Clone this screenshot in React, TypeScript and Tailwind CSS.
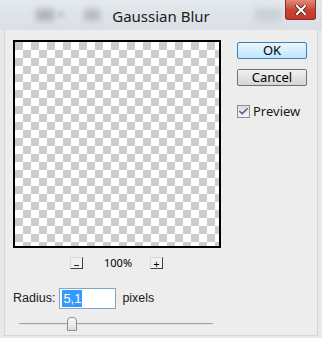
import { Check } from 'lucide-react';

const ui = "font-['Noto_Sans','Open_Sans',sans-serif]";

const ZoomButton = ({ label }: { label: string }) => (
  <div className="flex h-[12px] w-[13px] items-center justify-center border border-[#d8d8d8] border-b-[#404040] border-r-[#404040] bg-[#f0f0f0] text-[11px] leading-none text-black">
    {label}
  </div>
);

const App = () => {
  return (
    <div className={`flex h-[338px] w-[322px] flex-col overflow-hidden bg-[#e6e9ec] ${ui}`}>
      {/* title bar */}
      <div className="relative flex h-[30px] shrink-0 items-center justify-center bg-gradient-to-b from-[#e4e9ee] to-[#d9dfe4]">
        <div className="absolute left-[36px] top-[9px] h-[12px] w-[18px] bg-[#9aa0a6] opacity-70 blur-[3px]" />
        <div className="absolute left-[58px] top-[12px] h-[5px] w-[6px] bg-[#9aa0a6] opacity-50 blur-[2px]" />
        <div className="absolute left-[84px] top-[9px] h-[12px] w-[16px] bg-[#9aa0a6] opacity-60 blur-[3px]" />
        <div className="absolute left-[254px] top-[8px] h-[14px] w-[28px] bg-[#c4cacf] opacity-70 blur-[3px]" />
        <span className="relative pt-[2px] text-[15px] text-[#1a1a1a]">Gaussian Blur</span>
        <div className="absolute right-[6px] top-0 flex h-[20px] w-[31px] items-center justify-center rounded-b-[3px] border border-t-0 border-[#8a2d23] bg-gradient-to-b from-[#e08a7c] via-[#cc4533] to-[#c0382a]">
          <svg width="12" height="10" viewBox="0 0 12 10">
            <path d="M2 1 L10 9 M10 1 L2 9" stroke="#3a1410" strokeWidth="3.6" strokeLinecap="square" />
            <path d="M2 1 L10 9 M10 1 L2 9" stroke="#ffffff" strokeWidth="2.2" strokeLinecap="square" />
          </svg>
        </div>
      </div>

      {/* body */}
      <div className="mx-[4px] mb-[2px] flex flex-1 border border-t-0 border-[#d6d6d6] bg-[#ededed] pl-[8px] pt-[10px]">
        <div className="flex w-[208px] flex-col">
          <div className="h-[208px] w-[208px] border-2 border-black bg-[conic-gradient(#fff_25%,#cdcdcd_0_50%,#fff_0_75%,#cdcdcd_0)] bg-[length:16px_16px]" />
          <div className="mt-[7px] flex items-center pl-[57px]">
            <ZoomButton label="–" />
            <span className="ml-[21px] w-[26px] text-[11px] text-black">100%</span>
            <span className="ml-[20px]">
              <ZoomButton label="+" />
            </span>
          </div>
          <div className="mt-[16px] flex items-center font-['Liberation_Sans',Arial,sans-serif]">
            <span className="text-[12.5px] text-[#1a1a1a]">Radius:</span>
            <div className="ml-[4px] flex h-[21px] w-[57px] items-center border border-[#7fa6c6] bg-white pl-[2px]">
              <span className="bg-[#3399ff] px-[1px] text-[13px] leading-[17px] text-white">5,1</span>
            </div>
            <span className="ml-[6px] text-[12.5px] text-[#1a1a1a]">pixels</span>
          </div>
          <div className="relative mt-[8px] ml-[6px] flex h-[14px] w-[194px] items-center">
            <div className="h-[2px] w-full border-t border-[#a0a0a0] bg-[#e4e4e4]" />
            <div className="absolute left-[48px] top-0 h-[14px] w-[10px] rounded-t-[4px] border border-[#909090] bg-gradient-to-b from-[#fafafa] to-[#dcdcdc]" />
          </div>
        </div>

        <div className="ml-[16px] flex flex-col pt-[2px]">
          <div className="flex h-[17px] w-[70px] items-center justify-center rounded-[2px] border border-[#3c7fb1] bg-gradient-to-b from-[#eaf6fd] to-[#bee6fd] text-[13px] text-black">
            OK
          </div>
          <div className="mt-[10px] flex h-[17px] w-[70px] items-center justify-center rounded-[2px] border border-[#707070] bg-gradient-to-b from-[#f2f2f2] to-[#d4d4d4] text-[13px] text-black">
            Cancel
          </div>
          <div className="mt-[16px] flex items-center">
            <div className="flex h-[13px] w-[13px] items-center justify-center border border-[#8e8f8f] bg-gradient-to-b from-[#dcdcdc] to-[#f6f6f6]">
              <Check size={11} strokeWidth={3.5} className="text-[#4a5f97]" />
            </div>
            <span className="ml-[3px] text-[13px] text-[#1a1a1a]">Preview</span>
          </div>
        </div>
      </div>
    </div>
  );
};

export default App;
